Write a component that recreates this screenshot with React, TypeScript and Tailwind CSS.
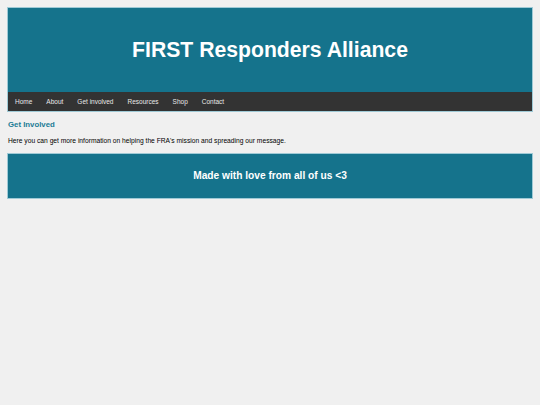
import React from 'react';

const navItems = ['Home', 'About', 'Get involved', 'Resources', 'Shop', 'Contact'];

export default function App() {
  return (
    <div className="min-h-[405px] bg-[#f0f0f0] px-[7px] pt-[7px] font-['Liberation_Sans',Arial,sans-serif]">
      <header className="border border-[#9fcad6] bg-[#15738c]">
        <div className="flex h-[84px] items-center justify-center">
          <h1 className="text-[21.2px] font-bold text-white">FIRST Responders Alliance</h1>
        </div>
        <nav className="flex h-[19px] items-center bg-[#333333]">
          {navItems.map((item) => (
            <a key={item} className="px-[7px] text-[6.5px] text-[#e8e8e8]">
              {item}
            </a>
          ))}
        </nav>
      </header>
      <main className="px-[1px]">
        <h2 className="mt-[8px] text-[7.8px] leading-[10px] font-bold text-[#1b7c96]">Get Involved</h2>
        <p className="mt-[6px] text-[6.7px] leading-[9px] text-black">
          Here you can get more information on helping the FRA's mission and spreading our message.
        </p>
      </main>
      <footer className="mt-[8px] flex h-[46px] items-center justify-center border border-[#9fcad6] bg-[#15738c]">
        <span className="text-[10.2px] font-bold text-white">Made with love from all of us &lt;3</span>
      </footer>
    </div>
  );
}
